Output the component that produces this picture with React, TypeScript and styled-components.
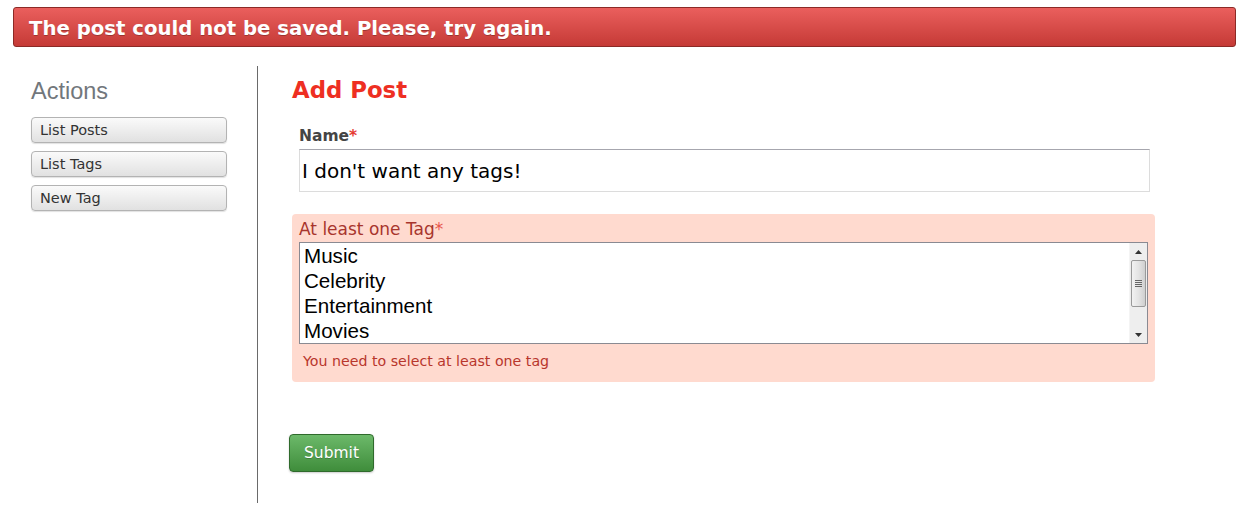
import React from "react";
import styled, { createGlobalStyle } from "styled-components";

const Global = createGlobalStyle`
  html, body { margin: 0; padding: 0; background: #fff; }
  body { font-family: "DejaVu Sans", Verdana, sans-serif; width: 1243px; height: 512px; overflow: hidden; }
`;

const Flash = styled.div`
  margin: 7px 7px 0 13px;
  height: 38px;
  border: 1px solid #8c2a26;
  border-radius: 3px;
  background: linear-gradient(to bottom, #ea5f5d 0%, #c53a36 100%);
  color: #fff;
  font-weight: bold;
  font-size: 19.7px;
  line-height: 42px;
  overflow: hidden;
  padding-left: 15px;
  text-shadow: 0 1px 0 rgba(0,0,0,0.25);
`;

const Layout = styled.div`
  display: flex;
  margin-top: 19px;
`;

const Sidebar = styled.div`
  width: 226px;
  padding-left: 31px;
  height: 437px;
`;

const SideTitle = styled.h3`
  margin: 12px 0 13px;
  font-family: "Liberation Sans", Arial, sans-serif;
  font-weight: normal;
  font-size: 23.5px;
  line-height: 26px;
  color: #72777c;
`;

const ActionList = styled.div`
  display: flex;
  flex-direction: column;
  gap: 8px;
  width: 196px;
`;

const ActionButton = styled.a`
  display: block;
  height: 24px;
  border: 1px solid #b3b3b3;
  border-radius: 4px;
  background: linear-gradient(to bottom, #fafafa 0%, #e1e1e1 100%);
  box-shadow: 0 1px 1px rgba(0,0,0,0.12);
  font-size: 14.5px;
  line-height: 25px;
  color: #333;
  padding-left: 8px;
  text-decoration: none;
`;

const Divider = styled.div`
  width: 1px;
  height: 437px;
  background: #6a6a6a;
`;

const Main = styled.div`
  flex: 1;
  padding-left: 34px;
`;

const Title = styled.h2`
  margin: 11px 0 0;
  font-size: 22.8px;
  line-height: 27px;
  font-weight: bold;
  color: #ee2f22;
`;

const Field = styled.div<{ $error?: boolean }>`
  width: ${(p) => (p.$error ? "849px" : "851px")};
  padding: ${(p) => (p.$error ? "5px 7px 11px 7px" : "0 7px")};
  margin-top: 22px;
  background: ${(p) => (p.$error ? "#ffdacf" : "transparent")};
  border-radius: 4px;
`;

const Label = styled.label<{ $error?: boolean }>`
  display: block;
  font-size: ${(p) => (p.$error ? "17px" : "15.5px")};
  font-weight: ${(p) => (p.$error ? "normal" : "bold")};
  color: ${(p) => (p.$error ? "#a8352d" : "#444")};
  line-height: 21px;
  margin-bottom: 2px;
`;

const Star = styled.span<{ $light?: boolean }>`
  color: ${(p) => (p.$light ? "#e8574c" : "#e53a32")};
  font-weight: ${(p) => (p.$light ? "normal" : "bold")};
`;

const TextInput = styled.div`
  width: 851px;
  box-sizing: border-box;
  height: 43px;
  border: 1px solid #dcdcdc;
  border-top-color: #a6a6ae;
  font-size: 20px;
  line-height: 43px;
  padding-left: 2px;
  color: #000;
`;

const SelectBox = styled.div`
  display: flex;
  width: 849px;
  box-sizing: border-box;
  height: 102px;
  border: 1px solid #8a8a92;
  background: #fff;
`;

const Options = styled.div`
  flex: 1;
  padding: 0 0 0 4px;
  font-family: "Liberation Sans", Arial, sans-serif;
  font-size: 20.6px;
  line-height: 25px;
  color: #000;
  overflow: hidden;
`;

const Scrollbar = styled.div`
  width: 17px;
  background: #eeeeee;
  display: flex;
  flex-direction: column;
  align-items: center;
  border-left: 1px solid #f4f4f4;
`;

const Arrow = styled.div`
  height: 17px;
  width: 17px;
  display: flex;
  align-items: center;
  justify-content: center;
`;

const Thumb = styled.div`
  width: 15px;
  height: 47px;
  box-sizing: border-box;
  border: 1px solid #9a9a9a;
  border-radius: 2px;
  background: linear-gradient(to right, #f2f2f2 0%, #e4e4e4 50%, #cfcfcf 100%);
  display: flex;
  align-items: center;
  justify-content: center;
`;

const Spacer = styled.div`
  flex: 1;
`;

const ErrorMsg = styled.div`
  margin-top: 7px;
  padding-left: 4px;
  font-size: 14.2px;
  line-height: 20px;
  color: #b8362c;
`;

const Submit = styled.button`
  margin: 52px 0 0 -3px;
  width: 85px;
  height: 38px;
  border: 1px solid #2f6a2c;
  border-radius: 4px;
  background: linear-gradient(to bottom, #6cb96a 0%, #3f8d3b 100%);
  box-shadow: 0 1px 2px rgba(0,0,0,0.2);
  color: #fff;
  font-family: "DejaVu Sans", Verdana, sans-serif;
  font-size: 15.5px;
  text-shadow: 0 1px 0 rgba(0,0,0,0.2);
  padding: 0;
`;

export default function App() {
  return (
    <>
      <Global />
      <Flash>The post could not be saved. Please, try again.</Flash>
      <Layout>
        <Sidebar>
          <SideTitle>Actions</SideTitle>
          <ActionList>
            <ActionButton>List Posts</ActionButton>
            <ActionButton>List Tags</ActionButton>
            <ActionButton>New Tag</ActionButton>
          </ActionList>
        </Sidebar>
        <Divider />
        <Main>
          <Title>Add Post</Title>
          <Field>
            <Label>
              Name<Star>*</Star>
            </Label>
            <TextInput>I don't want any tags!</TextInput>
          </Field>
          <Field $error>
            <Label $error>
              At least one Tag<Star $light>*</Star>
            </Label>
            <SelectBox>
              <Options>
                <div>Music</div>
                <div>Celebrity</div>
                <div>Entertainment</div>
                <div>Movies</div>
              </Options>
              <Scrollbar>
                <Arrow>
                  <svg width="7" height="4" viewBox="0 0 7 4"><path d="M3.5 0L7 4H0z" fill="#333" /></svg>
                </Arrow>
                <Thumb>
                  <svg width="7" height="7" viewBox="0 0 7 7">
                    <path d="M0 0.5h7M0 2.5h7M0 4.5h7M0 6.5h7" stroke="#666" strokeWidth="1" />
                  </svg>
                </Thumb>
                <Spacer />
                <Arrow>
                  <svg width="7" height="4" viewBox="0 0 7 4"><path d="M0 0h7L3.5 4z" fill="#333" /></svg>
                </Arrow>
              </Scrollbar>
            </SelectBox>
            <ErrorMsg>You need to select at least one tag</ErrorMsg>
          </Field>
          <Submit>Submit</Submit>
        </Main>
      </Layout>
    </>
  );
}
